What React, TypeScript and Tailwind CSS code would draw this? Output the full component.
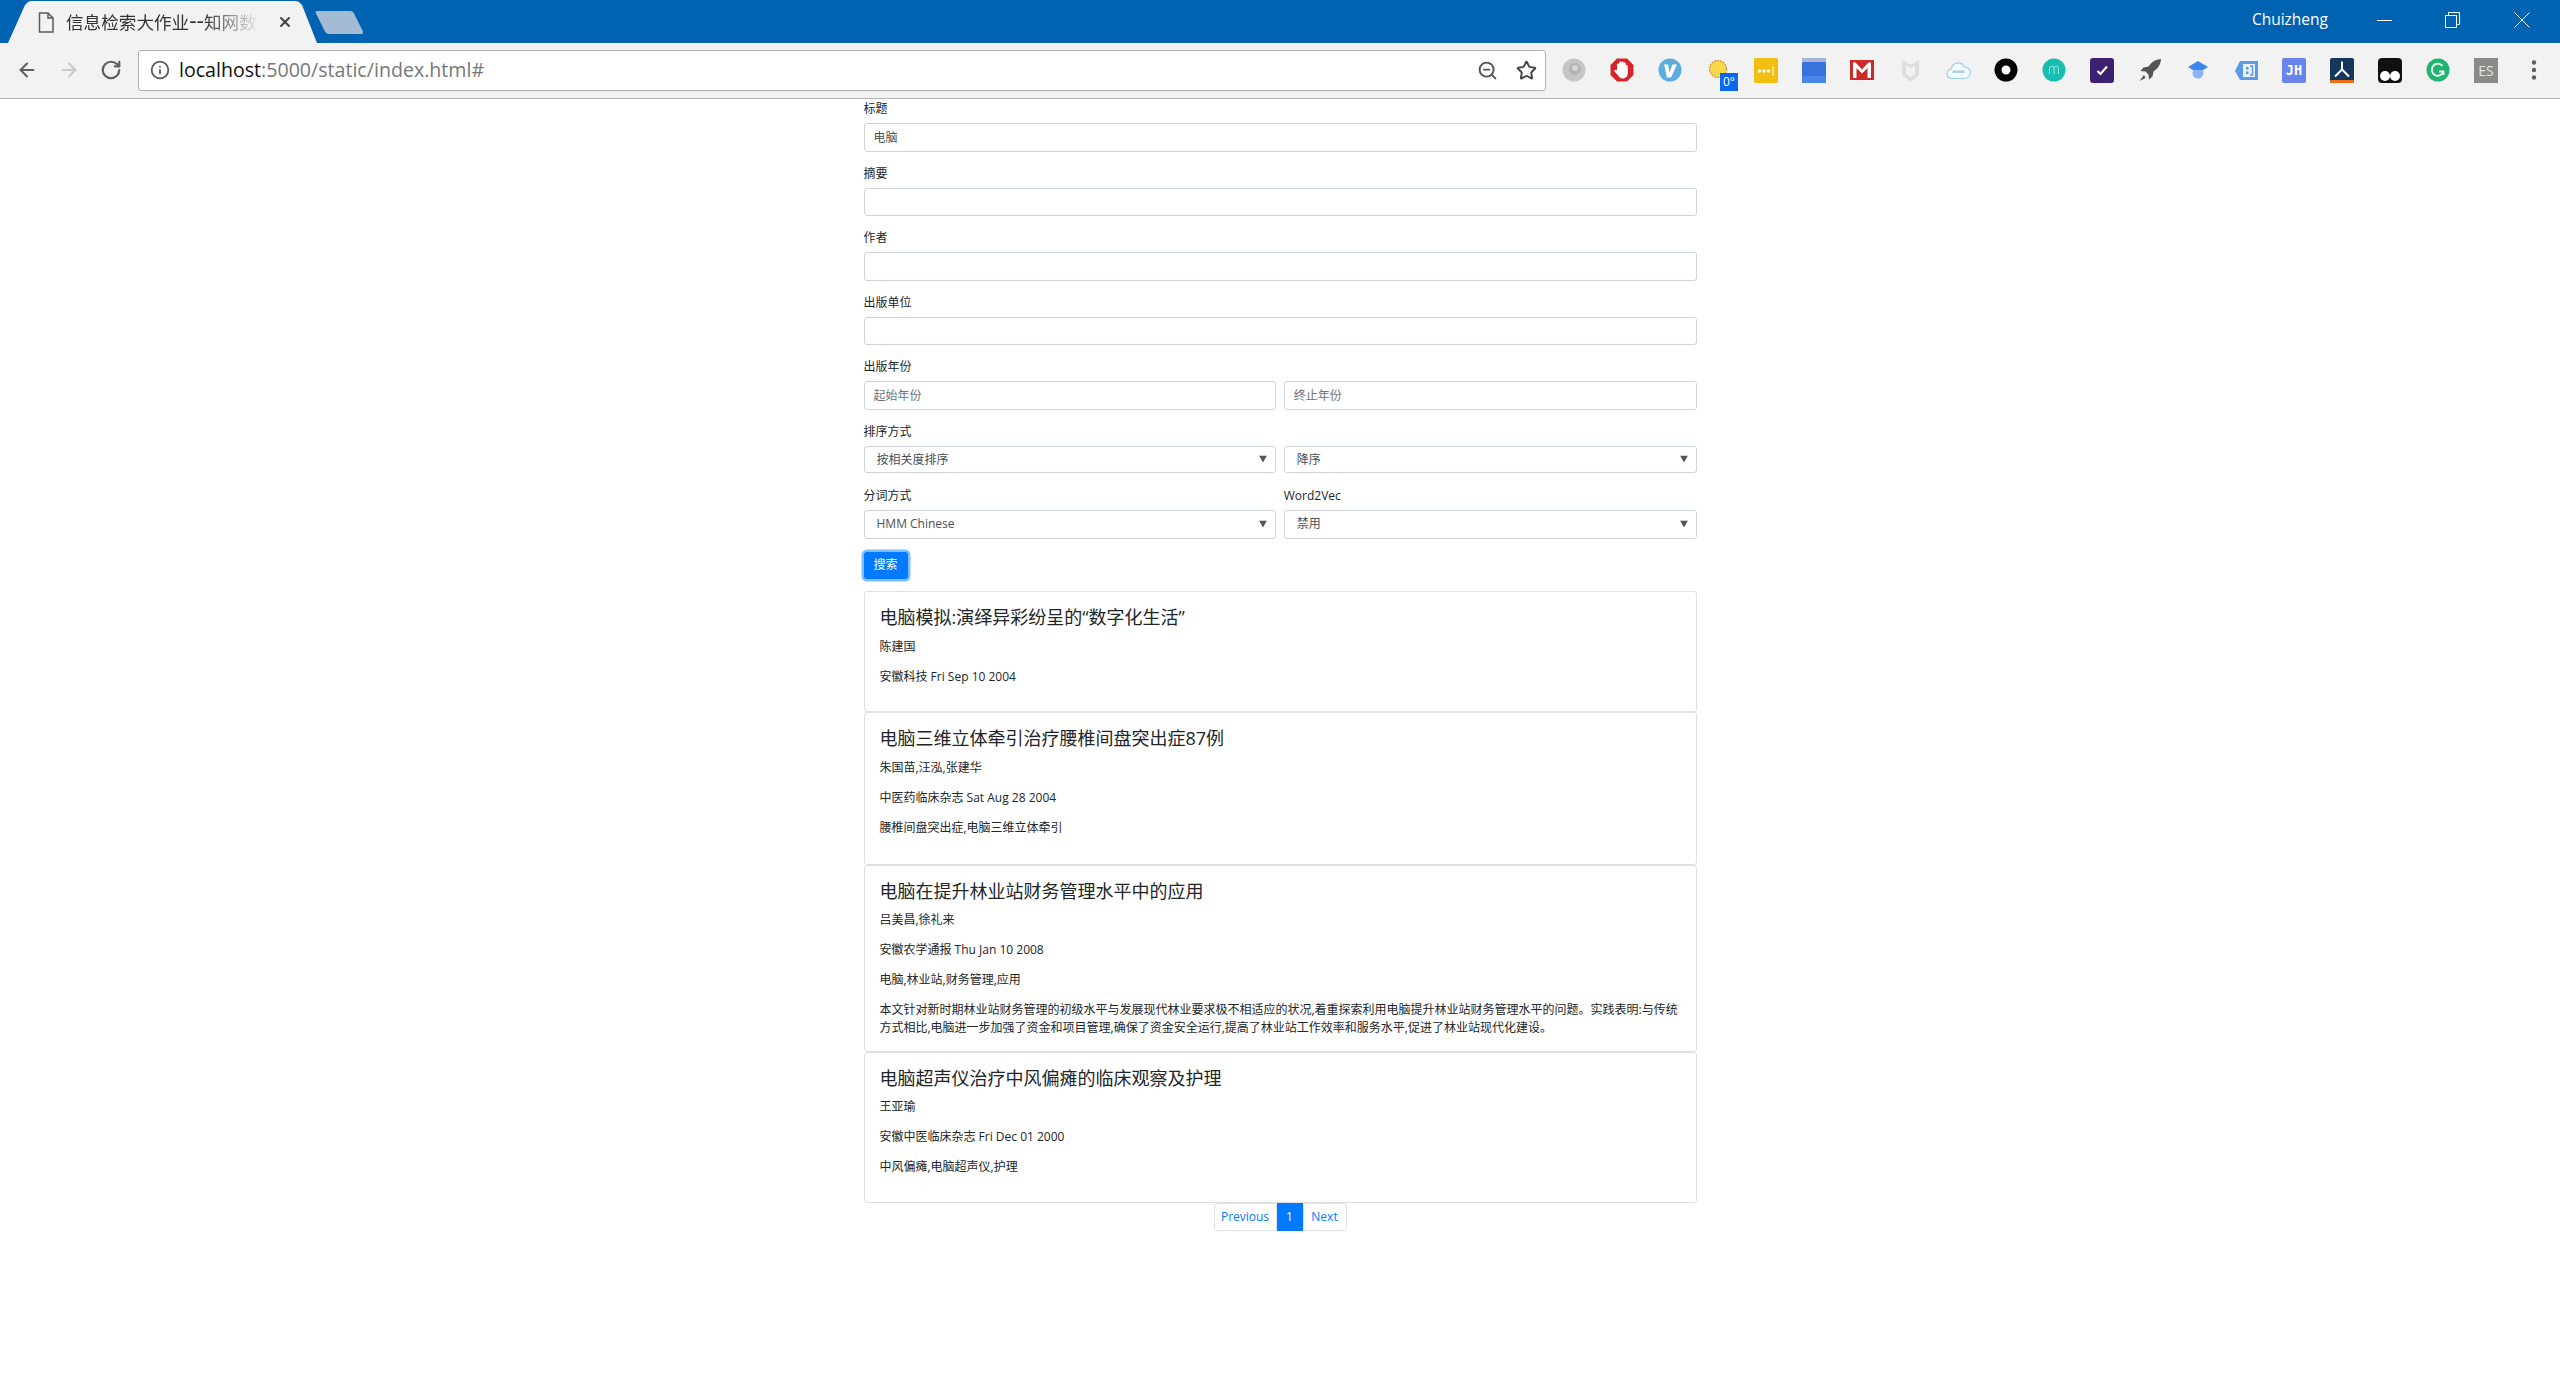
import React from "react";
import { ArrowLeft, ArrowRight, RotateCw, Info, ZoomOut, Star, X } from "lucide-react";

function Ext({ children }: { children: React.ReactNode }) {
  return <div className="relative w-[48px] h-[24px] flex items-center justify-center shrink-0">{children}</div>;
}

function Svg({ children }: { children: React.ReactNode }) {
  return <svg width="24" height="24" viewBox="0 0 24 24">{children}</svg>;
}

function Extensions() {
  return (
    <div className="flex items-center">
      <Ext><Svg><circle cx="12" cy="12" r="11.5" fill="#c6c6c6" /><circle cx="13" cy="11" r="6" fill="#b4b4b4" /><circle cx="13" cy="10" r="3" fill="#d6d6d6" /></Svg></Ext>
      <Ext><Svg><polygon points="7,0.500 17,0.500 23.500,7 23.500,17 17,23.500 7,23.500 0.500,17 0.500,7" fill="#d7242b" /><path d="M7 12V6.500a1.100 1.100 0 0 1 2.200 0V4.500a1.100 1.100 0 0 1 2.200 0a1.100 1.100 0 0 1 2.200 0V5.500a1.100 1.100 0 0 1 2.200 0V8a1 1 0 0 1 2 0V15c0 3-2 5.500-5 5.500-2.400 0-3.600-1-4.600-3L4.500 13.500c-.7-1.200 1-2.300 2-1.200z" fill="#fff" /></Svg></Ext>
      <Ext><Svg><circle cx="12" cy="12" r="11.5" fill="#5cacdf" /><path d="M6 6.500l4 0 1.500 8 3-8 4.500 0-6 13-4 0z" fill="#fff" /></Svg></Ext>
      <Ext>
        <Svg><circle cx="12" cy="11" r="8.500" fill="#f6d84a" stroke="#d98b2b" strokeWidth="1.200" strokeDasharray="2 1" /></Svg>
        <span className="absolute left-[26px] top-[15px] w-[18px] h-[18px] bg-[#0b66ee] text-white text-[12px] leading-[18px] text-center">0°</span>
      </Ext>
      <Ext><svg width="24" height="25" viewBox="0 0 24 25"><rect width="24" height="25" rx="1.500" fill="#f0bf12" /><circle cx="5.500" cy="13" r="1.700" fill="#fff" /><circle cx="10" cy="13" r="1.700" fill="#fff" /><circle cx="14.500" cy="13" r="1.700" fill="#fff" /><rect x="18.500" y="8" width="1" height="10" fill="#fff" /></svg></Ext>
      <Ext><svg width="24" height="25" viewBox="0 0 24 25"><rect width="24" height="4" fill="#a9b5d6" /><rect y="4" width="24" height="21" rx="1" fill="#3a72dc" /><rect y="18" width="24" height="7" rx="1" fill="#4a86e8" /></svg></Ext>
      <Ext><svg width="24" height="20" viewBox="0 0 24 20"><rect width="24" height="20" fill="#cf2a27" /><path d="M3 2.500h2.500L12 9.500l6.500-7H21V18h-3.500V8L12 13.500 6.500 8V18H3z" fill="#fff" /></svg></Ext>
      <Ext><svg width="19" height="25" viewBox="0 0 19 25"><path d="M1 2l4 2 4.500 3 4.500-3 4-2v15l-8.500 7L1 17z" fill="#dedede" /><path d="M5 7l4.500 3L14 7v9l-4.500 3L5 16z" fill="#f2f2f2" /></svg></Ext>
      <Ext>
        <svg width="25" height="19" viewBox="0 0 25 19"><path d="M6 17.500a4.500 4.500 0 0 1-.5-9.500A6.500 6.500 0 0 1 18 6a5.700 5.700 0 0 1 1 11.500z" fill="#f4fbfd" stroke="#9bd3e6" strokeWidth="1.200" /><rect x="6.500" y="9.500" width="12" height="2.500" fill="#a9d3e3" /></svg>
      </Ext>
      <Ext><Svg><circle cx="12" cy="12" r="8" fill="#fff" stroke="#000" strokeWidth="7" /></Svg></Ext>
      <Ext><Svg><circle cx="12" cy="12" r="11.500" fill="#16bdb0" /><path d="M7.500 16v-5.500a2 2 0 0 1 4.500 0V16m0-5.500a2 2 0 0 1 4.500 0V16" fill="none" stroke="#9ef0e4" strokeWidth="1" /></Svg></Ext>
      <Ext><svg width="24" height="25" viewBox="0 0 24 25"><rect width="24" height="25" rx="3" fill="#3c2170" /><path d="M7.500 13l3 3 6.500-7.500" fill="none" stroke="#fff" strokeWidth="2.200" /></svg></Ext>
      <Ext><Svg><path d="M23 1c-5.500.3-9.500 3-12.500 7.500L5.500 9.500 2.500 13l5 .5 3 3 .5 5 3.500-3 1-5C20 10.500 22.700 6.500 23 1z" fill="#555" /><path d="M6 17l-4.500 6 6-3z" fill="#555" /></Svg></Ext>
      <Ext><Svg><circle cx="12" cy="15" r="5.500" fill="#8ab4f4" /><path d="M12 3l10 6-5 3H7L2 9z" fill="#3b86e8" /></Svg></Ext>
      <Ext><Svg><path d="M6 3h18v19H6l-5-9z" fill="#5a9be8" /><rect x="9" y="6" width="12" height="13" fill="#eaf3fd" /><rect x="12" y="9" width="2.500" height="2.500" fill="#5a9be8" /><rect x="12" y="13.500" width="2.500" height="2.500" fill="#5a9be8" /><path d="M16 8h2.500v9H16" fill="none" stroke="#5a9be8" strokeWidth="1.500" /></Svg></Ext>
      <Ext>
        <div className="w-[24px] h-[25px] rounded-[2px] bg-[#6a84ee] text-white text-[13.5px] font-bold leading-[25px] text-center font-['DejaVu_Sans_Mono',monospace]">JH</div>
      </Ext>
      <Ext><svg width="24" height="25" viewBox="0 0 24 25"><rect width="24" height="25" rx="2" fill="#16375c" /><rect y="22" width="24" height="3" rx="1" fill="#ef6c12" /><path d="M12 3.500v8l-7 7M12 11.500l7 7" fill="none" stroke="#fff" strokeWidth="2" /></svg></Ext>
      <Ext><svg width="24" height="25" viewBox="0 0 24 25"><rect width="24" height="25" rx="4" fill="#111" /><circle cx="7" cy="18" r="5" fill="#fff" /><circle cx="17" cy="18" r="5" fill="#fff" /></svg></Ext>
      <Ext><Svg><circle cx="12" cy="12" r="11.500" fill="#1fb56f" /><path d="M16.500 8a6 6 0 1 0 1 5.500h-4.500" fill="none" stroke="#fff" strokeWidth="1.800" /><path d="M17.500 13.500v3.500" stroke="#fff" strokeWidth="1.800" /></Svg></Ext>
      <Ext>
        <div className="w-[24px] h-[25px] bg-[#8a8a8a] text-[#e6e6e6] text-[14px] leading-[25px] text-center font-['Open_Sans',sans-serif]">ES</div>
      </Ext>
      <Ext><svg width="6" height="22" viewBox="0 0 6 22"><circle cx="3" cy="3.500" r="2.200" fill="#5f5f5f" /><circle cx="3" cy="11" r="2.200" fill="#5f5f5f" /><circle cx="3" cy="18.500" r="2.200" fill="#5f5f5f" /></svg></Ext>
    </div>
  );
}

function BrowserChrome() {
  return (
    <header className="font-['Open_Sans','Noto_Sans_CJK_SC',sans-serif]">
      <div className="h-[43px] bg-[#0063b1] flex items-end">
        <div className="ml-[8px] w-[309px] h-[42px] bg-[#f2f2f2] [clip-path:polygon(0_100%,17px_4px,20px_1px,23px_0,288px_0,291px_1px,294px_4px,100%_100%)] flex items-center pl-[30px]">
          <svg className="shrink-0" width="16" height="21" viewBox="0 0 16 21" fill="none" stroke="#5a5a5a" strokeWidth="1.500"><path d="M1.500 1h8.500l5 5v14h-13.500zM10 1v5h5" /></svg>
          <span className="ml-[12px] w-[198px] whitespace-nowrap text-[17.6px] leading-[24px] text-[#333] [mask-image:linear-gradient(to_right,#000_70%,transparent_98%)]">信息检索大作业<span className="text-[23px] leading-[20px]">--</span>知网数</span>
          <X className="ml-[13px] w-[16px] h-[16px] text-[#444] shrink-0" strokeWidth={3} />
        </div>
        <svg className="self-start mt-[11px] -ml-[2px]" width="48" height="23" viewBox="0 0 48 23"><path d="M3 0h32c2 0 3 .8 4 2.500l9 18c.5 1.500 0 2.500-2 2.500H14c-2 0-3-1-4-2.500L1 2.500C0 1 .8 0 3 0z" fill="#a4bcd3" /></svg>
        <div className="ml-auto self-stretch flex items-start text-white pr-[2px]">
          <span className="text-[15.5px] leading-[38px] h-[40px] mr-[22px]">Chuizheng</span>
          <div className="w-[68px] h-[40px] flex items-center justify-center"><div className="w-[15px] h-px bg-white" /></div>
          <div className="w-[68px] h-[40px] flex items-center justify-center">
            <svg width="15" height="16" viewBox="0 0 15 16" fill="none" stroke="#fff"><rect x=".5" y="3.500" width="11" height="12" /><path d="M3.500 3.500v-3h11v12h-3" /></svg>
          </div>
          <div className="w-[72px] h-[40px] flex items-center justify-center">
            <svg width="16" height="16" viewBox="0 0 16 16" stroke="#fff"><path d="M.5.500l15 15M15.500.500l-15 15" /></svg>
          </div>
        </div>
      </div>
      <div className="h-[56px] bg-[#f2f2f2] border-b border-[#b4b4b4] flex items-center pl-[16px] pr-[2px]">
        <div className="w-[122px] flex items-center gap-[20px] -mt-[1px]">
          <ArrowLeft className="w-[22px] h-[22px] text-[#5f5f5f]" strokeWidth={2.2} />
          <ArrowRight className="w-[22px] h-[22px] text-[#c9c9c9]" strokeWidth={2.2} />
          <RotateCw className="w-[22px] h-[22px] text-[#5f5f5f]" strokeWidth={2.4} />
        </div>
        <div className="w-[1408px] h-[41px] -mt-[1px] bg-white border border-[#b0b0b0] rounded-[3px] flex items-center pl-[11px] pr-[8px]">
          <Info className="w-[20px] h-[20px] text-[#5a5a5a] shrink-0" strokeWidth={2.2} />
          <span className="ml-[9px] text-[19.6px] leading-[28px] text-[#111]">localhost<span className="text-[#777]">:5000/static/index.html#</span></span>
          <ZoomOut className="ml-auto w-[21px] h-[21px] text-[#555]" strokeWidth={2.2} />
          <Star className="ml-[18px] w-[21px] h-[21px] text-[#444]" strokeWidth={2.2} />
        </div>
        <div className="ml-[4px] -mt-[1px]"><Extensions /></div>
      </div>
    </header>
  );
}

function Field({ label, children }: { label: string; children: React.ReactNode }) {
  return (
    <div className="mb-[12px]">
      <label className="block h-[19px] pt-[1px] mb-[5px] text-[12px] leading-[18px] text-[#212529]">{label}</label>
      {children}
    </div>
  );
}

const inputCls =
  "block w-full h-[28.5px] px-[9px] text-[12px] leading-[18px] text-[#495057] bg-white border border-[#ced4da] rounded-[3px] outline-none placeholder:text-[#6c757d]";

function SelectBox({ options, short }: { options: string[]; short?: boolean }) {
  return (
    <div className={short ? "relative mt-[0.5px] mb-[1px]" : "relative"}>
      <select
        defaultValue={options[0]}
        className={`block w-full appearance-none ${short ? "h-[27.5px] pt-[2px]" : "h-[28.5px]"} pl-[12px] pr-[20px] text-[12px] leading-[18px] text-[#495057] bg-white border border-[#ced4da] rounded-[3px] outline-none`}
      >
        {options.map((o) => (
          <option key={o}>{o}</option>
        ))}
      </select>
      <svg className="absolute right-[9px] top-1/2 -translate-y-1/2 pointer-events-none" width="8" height="7" viewBox="0 0 8 7">
        <path d="M0 0h8L4 7z" fill="#555" />
      </svg>
    </div>
  );
}

function Card({ title, lines, abstract, tall }: { title: React.ReactNode; lines: string[]; abstract?: string; tall?: boolean }) {
  return (
    <div className={`border border-[#dfdfdf] rounded-[3px] bg-white pt-[15px] px-[15px] ${tall ? "pb-[15px]" : "pb-[13.5px]"} text-[#212529]`}>
      <h4 className="mb-[9px] text-[18px] leading-[21.6px] font-normal">{title}</h4>
      {lines.map((l) => (
        <p key={l} className="mb-[12px] text-[12px] leading-[18px]">{l}</p>
      ))}
      {abstract && <p className="text-[12px] leading-[18px]">{abstract}</p>}
    </div>
  );
}

export default function App() {
  return (
    <div className="min-h-screen bg-white">
      <BrowserChrome />
      <main className="w-[833px] mx-auto font-['Open_Sans','Noto_Sans_CJK_SC',sans-serif]">
        <Field label="标题"><input className={inputCls} defaultValue="电脑" /></Field>
        <Field label="摘要"><input className={inputCls} /></Field>
        <Field label="作者"><input className={inputCls} /></Field>
        <Field label="出版单位"><input className={inputCls} /></Field>
        <Field label="出版年份">
          <div className="grid grid-cols-2 gap-[7.5px]">
            <input className={inputCls} placeholder="起始年份" />
            <input className={inputCls} placeholder="终止年份" />
          </div>
        </Field>
        <div className="grid grid-cols-2 gap-x-[7.5px]">
          <Field label="排序方式"><SelectBox short options={["按相关度排序", "按时间排序"]} /></Field>
          <Field label=""><SelectBox short options={["降序", "升序"]} /></Field>
          <Field label="分词方式"><SelectBox options={["HMM Chinese", "Jieba"]} /></Field>
          <Field label="Word2Vec"><SelectBox options={["禁用", "启用"]} /></Field>
        </div>
        <button className="block mt-[1.7px] w-[44px] h-[26.5px] bg-[#007bff] text-white text-[12px] leading-[18px] rounded-[3px] ring-[2.5px] ring-[#80bdff] mb-[12.3px]">搜索</button>
        <section>
          <Card title="电脑模拟:演绎异彩纷呈的“数字化生活”" lines={["陈建国", "安徽科技 Fri Sep 10 2004"]} />
          <Card tall title={<>电脑三维立体牵引治疗腰椎间盘突出症<span className="font-medium">87</span>例</>} lines={["朱国苗,汪泓,张建华", "中医药临床杂志 Sat Aug 28 2004", "腰椎间盘突出症,电脑三维立体牵引"]} />
          <Card
            title="电脑在提升林业站财务管理水平中的应用"
            lines={["吕美昌,徐礼来", "安徽农学通报 Thu Jan 10 2008", "电脑,林业站,财务管理,应用"]}
            abstract="本文针对新时期林业站财务管理的初级水平与发展现代林业要求极不相适应的状况,着重探索利用电脑提升林业站财务管理水平的问题。实践表明:与传统方式相比,电脑进一步加强了资金和项目管理,确保了资金安全运行,提高了林业站工作效率和服务水平,促进了林业站现代化建设。"
          />
          <Card title="电脑超声仪治疗中风偏瘫的临床观察及护理" lines={["王亚瑜", "安徽中医临床杂志 Fri Dec 01 2000", "中风偏瘫,电脑超声仪,护理"]} />
        </section>
        <nav className="flex justify-center">
          <div className="flex h-[28.5px] text-[12px] leading-[18px]">
            <a href="#" className="w-[63px] flex items-center justify-center bg-white text-[#007bff] border border-[#dee2e6] rounded-l-[3px]">Previous</a>
            <a href="#" className="w-[26px] flex items-center justify-center bg-[#007bff] text-white">1</a>
            <a href="#" className="w-[44px] flex items-center justify-center bg-white text-[#007bff] border border-[#dee2e6] rounded-r-[3px]">Next</a>
          </div>
        </nav>
      </main>
    </div>
  );
}
